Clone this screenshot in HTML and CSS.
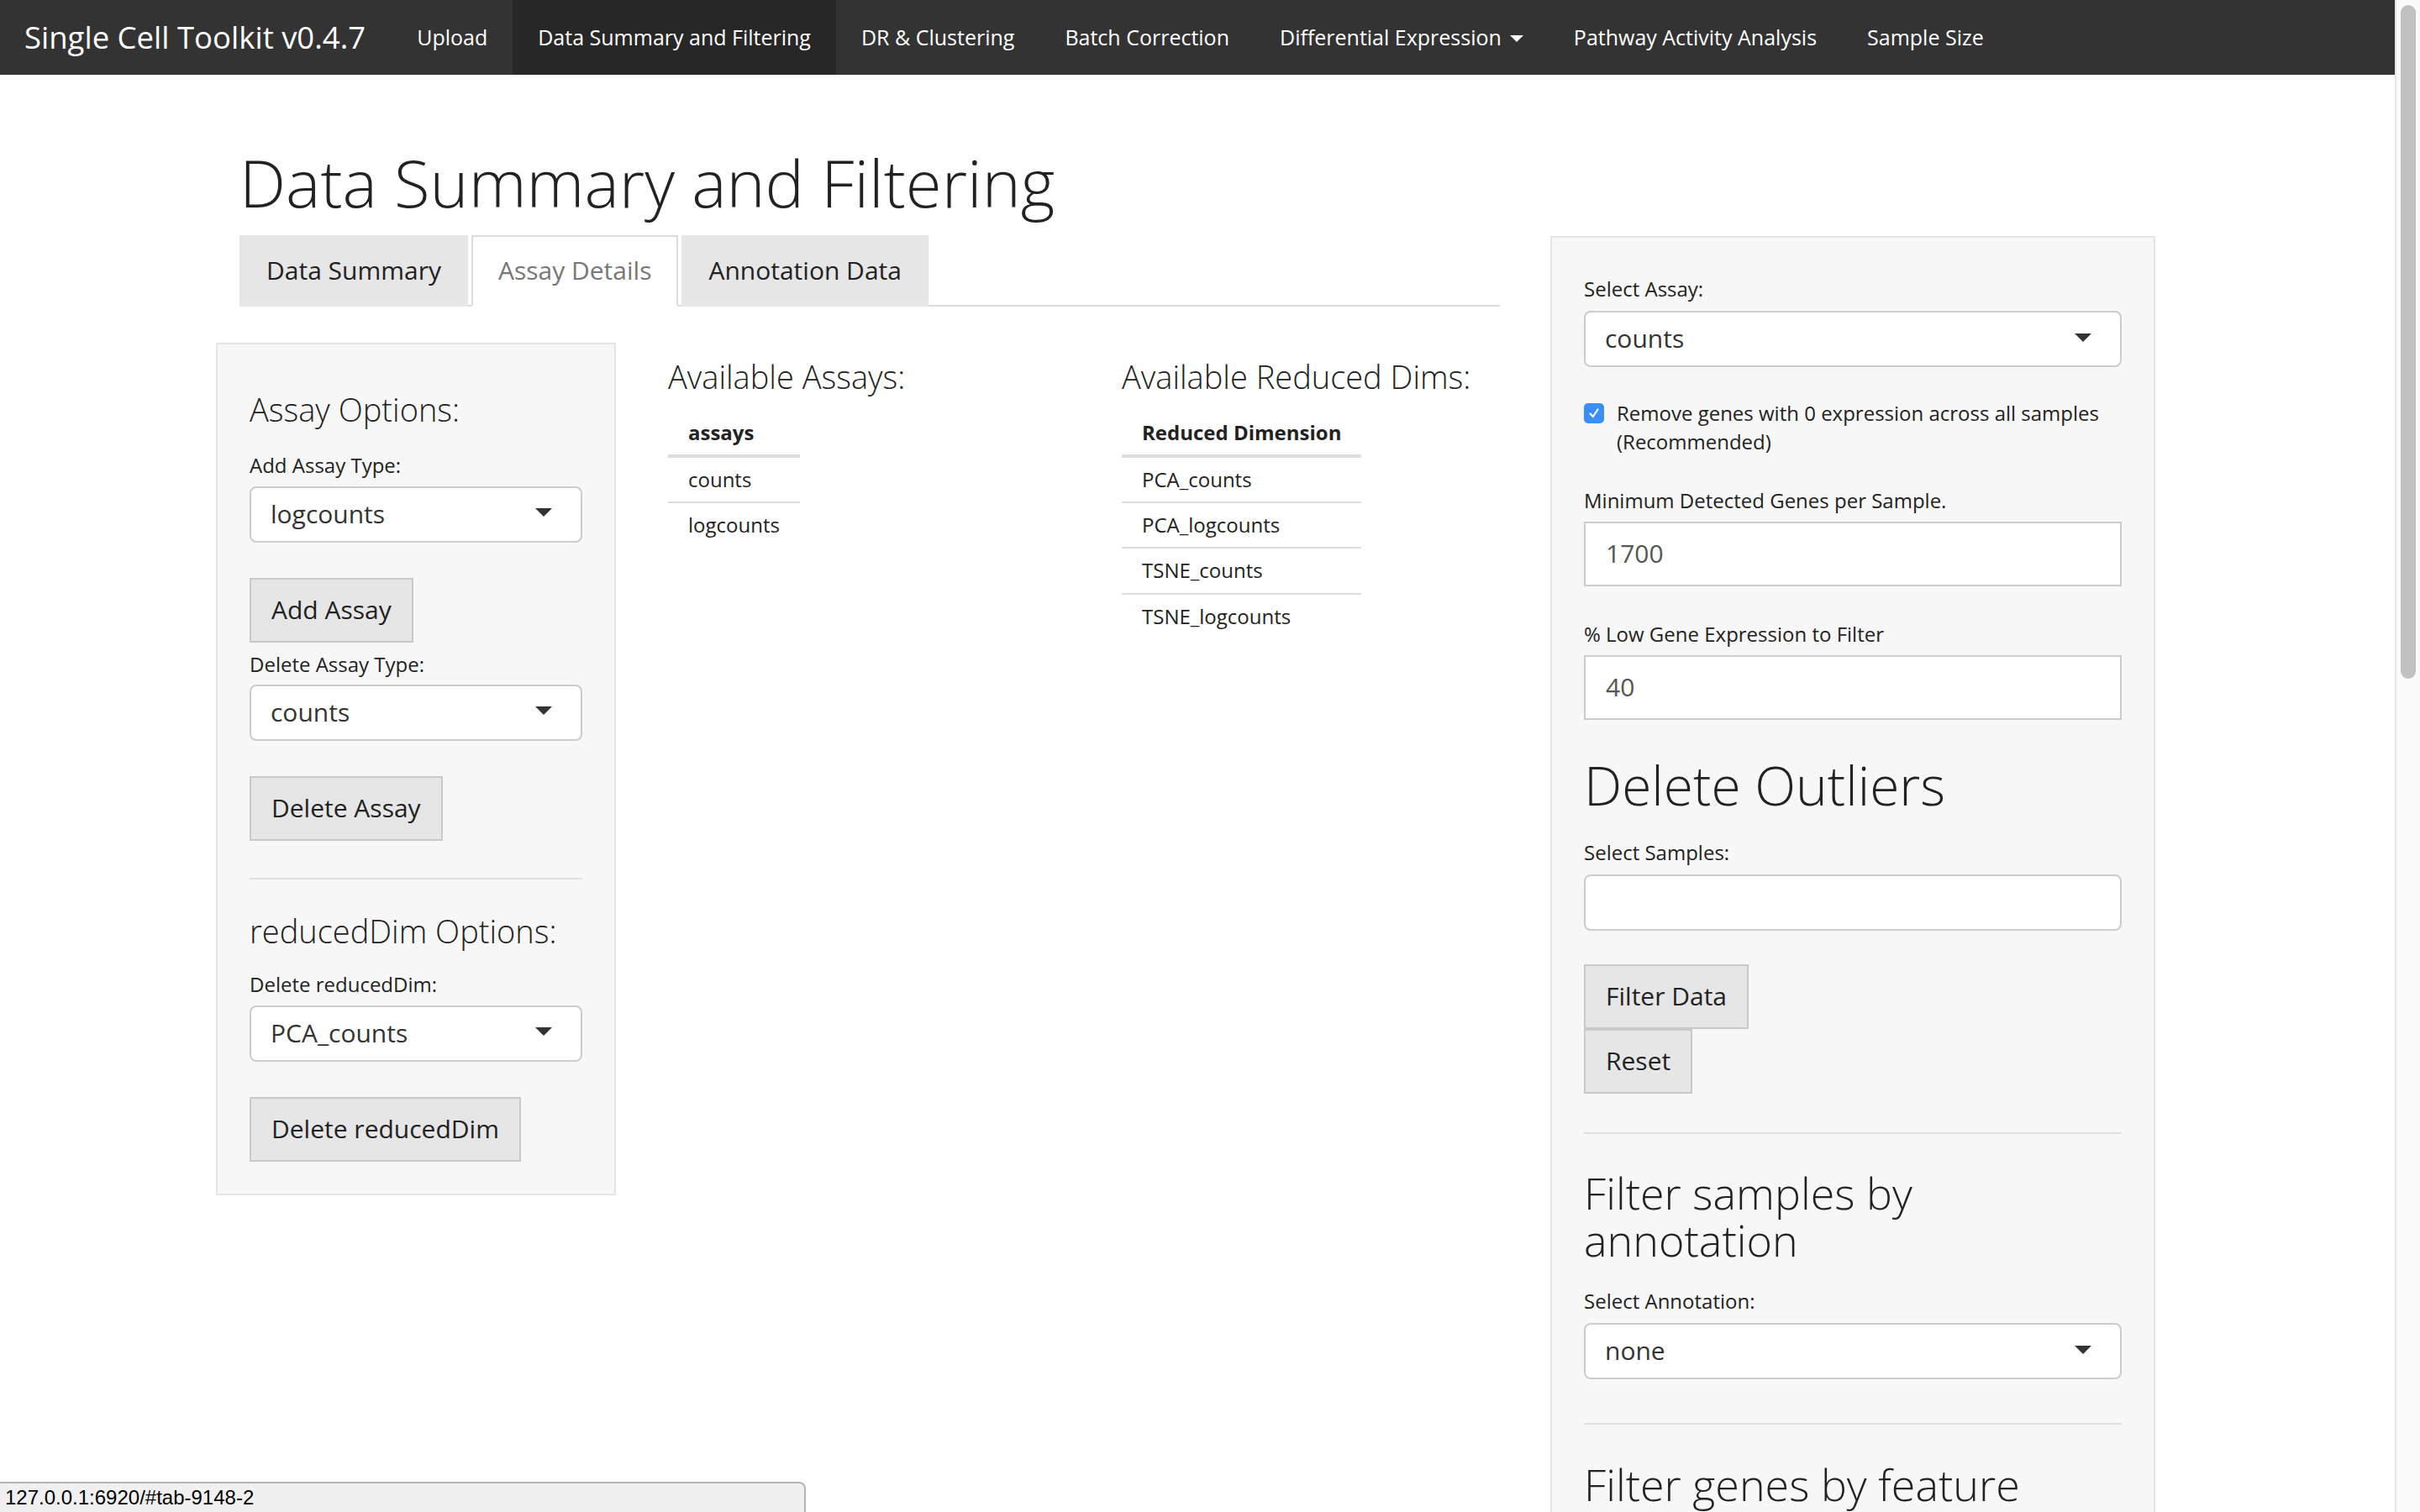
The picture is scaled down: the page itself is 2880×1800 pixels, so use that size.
FILE: index.html
```html
<!DOCTYPE html>
<html lang="en">
<head>
<meta charset="utf-8">
<title>Single Cell Toolkit</title>
<link rel="stylesheet" href="styles.css">
</head>
<body>
<div class="viewport">
  <div class="page">
    <nav class="navbar">
      <span class="brand">Single Cell Toolkit v0.4.7</span>
      <ul class="nav">
        <li>Upload</li>
        <li class="active">Data Summary and Filtering</li>
        <li>DR &amp; Clustering</li>
        <li>Batch Correction</li>
        <li>Differential Expression<span class="caret"></span></li>
        <li>Pathway Activity Analysis</li>
        <li>Sample Size</li>
      </ul>
    </nav>

    <div class="container">
      <h1 class="title">Data Summary and Filtering</h1>
      <div class="row">
        <div class="main-col">
          <ul class="tabs">
            <li class="tab">Data Summary</li>
            <li class="tab active">Assay Details</li>
            <li class="tab">Annotation Data</li>
          </ul>
          <div class="tab-content">
            <div class="well left-well">
              <h4 class="well-h4">Assay Options:</h4>
              <label class="lbl">Add Assay Type:</label>
              <div class="select"><span>logcounts</span><span class="arrow"></span></div>
              <div class="btn-wrap"><span class="btn">Add Assay</span></div>
              <label class="lbl">Delete Assay Type:</label>
              <div class="select"><span>counts</span><span class="arrow"></span></div>
              <div class="btn-wrap"><span class="btn">Delete Assay</span></div>
              <hr class="well-hr">
              <h4 class="well-h4 after-hr">reducedDim Options:</h4>
              <label class="lbl">Delete reducedDim:</label>
              <div class="select"><span>PCA_counts</span><span class="arrow"></span></div>
              <div class="btn-wrap last"><span class="btn">Delete reducedDim</span></div>
            </div>

            <div class="table-col">
              <h4 class="col-h4">Available Assays:</h4>
              <table class="tbl">
                <thead><tr><th>assays</th></tr></thead>
                <tbody>
                  <tr><td>counts</td></tr>
                  <tr><td>logcounts</td></tr>
                </tbody>
              </table>
            </div>

            <div class="table-col">
              <h4 class="col-h4">Available Reduced Dims:</h4>
              <table class="tbl">
                <thead><tr><th>Reduced Dimension</th></tr></thead>
                <tbody>
                  <tr><td>PCA_counts</td></tr>
                  <tr><td>PCA_logcounts</td></tr>
                  <tr><td>TSNE_counts</td></tr>
                  <tr><td>TSNE_logcounts</td></tr>
                </tbody>
              </table>
            </div>
          </div>
        </div>

        <div class="well right-well">
          <label class="lbl first">Select Assay:</label>
          <div class="select"><span>counts</span><span class="arrow"></span></div>

          <div class="check-row">
            <span class="checkbox">
              <svg width="16" height="16" viewBox="0 0 16 16"><polyline points="3.5,8.5 6.8,12 12.5,3.5" fill="none" stroke="#fff" stroke-width="2.2" stroke-linecap="round" stroke-linejoin="round"/></svg>
            </span>
            <span class="check-text">Remove genes with 0 expression across all samples (Recommended)</span>
          </div>

          <label class="lbl min-genes">Minimum Detected Genes per Sample.</label>
          <div class="input">1700</div>

          <label class="lbl low-gene">% Low Gene Expression to Filter</label>
          <div class="input">40</div>

          <h2 class="well-h2">Delete Outliers</h2>
          <label class="lbl samples">Select Samples:</label>
          <div class="select empty"></div>

          <div class="btn-stack">
            <span class="btn">Filter Data</span>
            <span class="btn">Reset</span>
          </div>

          <hr class="right-hr">
          <h3 class="well-h3">Filter samples by annotation</h3>
          <label class="lbl annot">Select Annotation:</label>
          <div class="select"><span>none</span><span class="arrow"></span></div>

          <hr class="right-hr second">
          <h3 class="well-h3 genes">Filter genes by feature</h3>
        </div>
      </div>
    </div>
  </div>
  <div class="scrollbar"><div class="thumb"></div></div>
</div>
<div class="statusbar">127.0.0.1:6920/#tab-9148-2</div>
</body>
</html>
```

FILE: styles.css
```css
* { box-sizing: border-box; }

html, body {
  margin: 0;
  padding: 0;
  height: 100%;
}

body {
  font-family: "Open Sans", "DejaVu Sans", sans-serif;
  color: #222;
  background: #fff;
  font-size: 28px;
  line-height: 1.42857;
  overflow: hidden;
}

.viewport {
  display: flex;
  height: 1800px;
  overflow: hidden;
}

.page {
  flex: 1;
  min-width: 0;
  overflow: hidden;
}

/* fake browser scrollbar */
.scrollbar {
  flex: none;
  width: 30px;
  background: #fafafa;
  border-left: 2px solid #e6e6e6;
  padding: 6px 5px 0 5px;
}
.thumb {
  height: 802px;
  background: #c1c1c1;
  border-radius: 9px;
}

/* navbar */
.navbar {
  height: 89px;
  background: #333;
  color: #fff;
  display: flex;
  align-items: stretch;
}
.brand {
  display: flex;
  align-items: center;
  font-size: 36.5px;
  padding: 0 31px 0 29px;
  white-space: nowrap;
}
.nav {
  display: flex;
  list-style: none;
  margin: 0;
  padding: 0;
}
.nav li {
  display: flex;
  align-items: center;
  padding: 0 30px;
  font-size: 25px;
  white-space: nowrap;
}
.nav li.active {
  background: #272727;
}
.caret {
  display: inline-block;
  width: 0;
  height: 0;
  margin-left: 10px;
  margin-top: 3px;
  border-top: 8px solid #fff;
  border-left: 8px solid transparent;
  border-right: 8px solid transparent;
}

/* container */
.container {
  width: 2340px;
  margin: 0 auto;
  padding: 0 30px;
}
.title {
  font-size: 78px;
  font-weight: 300;
  line-height: 1.1;
  margin: 86px 0 19px;
}
.row {
  display: grid;
  grid-template-columns: 1500px 720px;
  column-gap: 60px;
  align-items: start;
}

/* tabs */
.tabs {
  display: flex;
  list-style: none;
  margin: 0;
  padding: 0;
  border-bottom: 2px solid #ddd;
}
.tab {
  font-size: 30px;
  line-height: 1.42857;
  padding: 19px 30px;
  margin-right: 4px;
  margin-bottom: -2px;
  background: #e6e6e6;
  border: 2px solid transparent;
  color: #222;
}
.tab.active {
  background: #fff;
  border-color: #ddd;
  border-bottom-color: #fff;
  color: #777;
}

.tab-content {
  display: grid;
  grid-template-columns: 476px 478px 1fr;
  column-gap: 62px;
  align-items: start;
  margin-left: -28px;
  margin-top: 43px;
}

/* wells */
.well {
  background: #f7f7f7;
  border: 2px solid #e5e5e5;
  padding: 38px;
}
.right-well {
  margin-top: 1px;
  padding-bottom: 200px;
}

.well-h4, .col-h4 {
  font-size: 38px;
  font-weight: 300;
  line-height: 1.1;
  margin: 19px 0 23px;
}
.well-h4.after-hr {
  margin: 0 0 20px;
}
.col-h4 {
  margin: 20px 0 21px;
  white-space: nowrap;
}

.lbl {
  display: block;
  font-size: 24px;
  line-height: 1.42857;
  padding-top: 6px;
  margin: 0 0 7px;
}
.lbl.first { margin-top: 0; margin-bottom: 9px; }
.lbl.min-genes { margin-top: 29px; margin-bottom: 8px; }
.lbl.low-gene { margin-top: 34px; margin-bottom: 8px; }
.lbl.samples { margin-top: 21px; margin-bottom: 9px; }
.lbl.annot { margin-top: 22px; margin-bottom: 9px; }

.select {
  display: flex;
  align-items: center;
  justify-content: space-between;
  height: 67px;
  background: #fff;
  border: 2px solid #ccc;
  border-radius: 8px;
  padding: 0 34px 0 23px;
  font-size: 30px;
  color: #333;
}
.arrow {
  width: 0;
  height: 0;
  margin-top: -4px;
  border-top: 10px solid #333;
  border-left: 10px solid transparent;
  border-right: 10px solid transparent;
}

.input {
  display: flex;
  align-items: center;
  height: 77px;
  background: #fff;
  border: 2px solid #ccc;
  padding: 0 24px;
  font-size: 30px;
  color: #555;
}

.btn-wrap {
  margin: 42px 0 3px;
}
.btn-wrap.last { margin-bottom: 0; }

.btn {
  display: inline-block;
  font-size: 30px;
  line-height: 1.42857;
  padding: 15px 24px;
  background: #e6e6e6;
  border: 2px solid #c9c9c9;
  color: #222;
}

.well-hr {
  border: 0;
  border-top: 2px solid #e0e0e0;
  margin: 44px 0 41px;
}

/* tables */
.tbl {
  border-collapse: separate;
  border-spacing: 0;
  font-size: 24px;
  line-height: 1.42857;
}
.tbl th {
  text-align: left;
  font-weight: 700;
  padding: 8px 24px;
  border-bottom: 4px solid #ddd;
  white-space: nowrap;
}
.tbl td {
  padding: 9px 24px;
  white-space: nowrap;
}
.tbl tbody tr + tr td {
  border-top: 2px solid #ddd;
}

/* right well */
.check-row {
  display: flex;
  gap: 15px;
  margin-top: 38px;
  font-size: 24px;
  line-height: 1.42857;
}
.checkbox {
  flex: none;
  width: 24px;
  height: 24px;
  margin-top: 5px;
  background: #3a8ef5;
  border-radius: 5px;
  display: flex;
  align-items: center;
  justify-content: center;
}
.checkbox svg { display: block; }

.well-h2 {
  font-size: 64px;
  font-weight: 300;
  line-height: 1.1;
  margin: 43px 0 0;
}

.btn-stack {
  display: flex;
  flex-direction: column;
  align-items: flex-start;
  margin-top: 40px;
}

.right-hr {
  border: 0;
  border-top: 2px solid #e0e0e0;
  margin: 46px 0 0;
}
.right-hr.second { margin-top: 52px; }

.well-h3 {
  font-size: 52px;
  font-weight: 300;
  line-height: 1.08;
  margin: 42px 0 0;
}
.well-h3.genes { margin-top: 43px; }

/* hover status bubble */
.statusbar {
  position: fixed;
  left: 0;
  bottom: 0;
  width: 959px;
  height: 36px;
  background: #f0f0f0;
  border: 2px solid #b5b5b5;
  border-left: 0;
  border-bottom: 0;
  border-top-right-radius: 8px;
  padding-left: 6px;
  font-family: "Liberation Sans", Arial, sans-serif;
  font-size: 24px;
  line-height: 33px;
  color: #000;
}
```
